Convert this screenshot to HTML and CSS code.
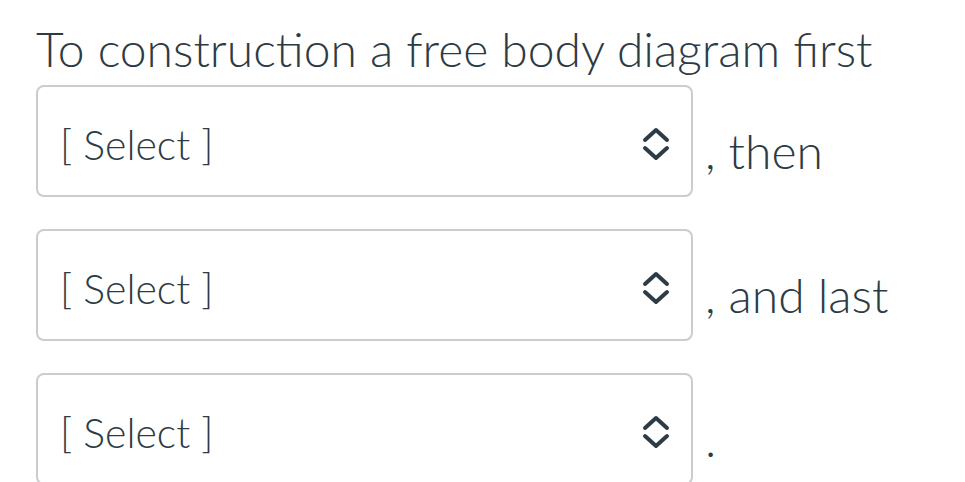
FILE: index.html
```html
<!DOCTYPE html>
<html lang="en">
<head>
<meta charset="utf-8">
<link rel="stylesheet" href="styles.css">
</head>
<body>
<div class="question">
  <p class="lead">To construction a free body diagram first</p>
  <div class="row">
    <div class="select"><span class="placeholder">[ Select ]</span>
      <svg class="chev" viewBox="0 0 30 34" width="30" height="34"><path d="M4 13 L15 3 L26 13 M4 21 L15 31 L26 21" fill="none" stroke="#2d3b45" stroke-width="4" stroke-linecap="round" stroke-linejoin="round"/></svg>
    </div>
    <span class="after">, then</span>
  </div>
  <div class="row">
    <div class="select"><span class="placeholder">[ Select ]</span>
      <svg class="chev" viewBox="0 0 30 34" width="30" height="34"><path d="M4 13 L15 3 L26 13 M4 21 L15 31 L26 21" fill="none" stroke="#2d3b45" stroke-width="4" stroke-linecap="round" stroke-linejoin="round"/></svg>
    </div>
    <span class="after">, and last</span>
  </div>
  <div class="row">
    <div class="select"><span class="placeholder">[ Select ]</span>
      <svg class="chev" viewBox="0 0 30 34" width="30" height="34"><path d="M4 13 L15 3 L26 13 M4 21 L15 31 L26 21" fill="none" stroke="#2d3b45" stroke-width="4" stroke-linecap="round" stroke-linejoin="round"/></svg>
    </div>
    <span class="after">.</span>
  </div>
</div>
</body>
</html>
```
FILE: styles.css
```css
html, body {
  margin: 0;
  padding: 0;
  background: #ffffff;
}
body {
  font-family: Lato, "Open Sans", sans-serif;
  font-weight: 300;
  color: #2d3b45;
  overflow: hidden;
  height: 482px;
}
.question {
  padding: 20px 0 0 36px;
}
.lead {
  margin: 0;
  font-size: 48px;
  line-height: 58px;
  height: 65px;
}
.row {
  display: flex;
  align-items: flex-start;
  margin-bottom: 32px;
}
.select {
  box-sizing: border-box;
  flex: none;
  width: 657px;
  height: 112px;
  border: 2px solid #c7cdd1;
  border-radius: 8px;
  display: flex;
  align-items: center;
  justify-content: space-between;
  padding: 0 20px 0 22px;
}
.placeholder {
  font-size: 41px;
  line-height: 49px;
  margin-top: 6px;
}
.chev {
  display: block;
  margin-top: 6px;
}
.after {
  font-size: 48px;
  line-height: 58px;
  margin-top: 37px;
  margin-left: 12px;
  white-space: nowrap;
}
```
